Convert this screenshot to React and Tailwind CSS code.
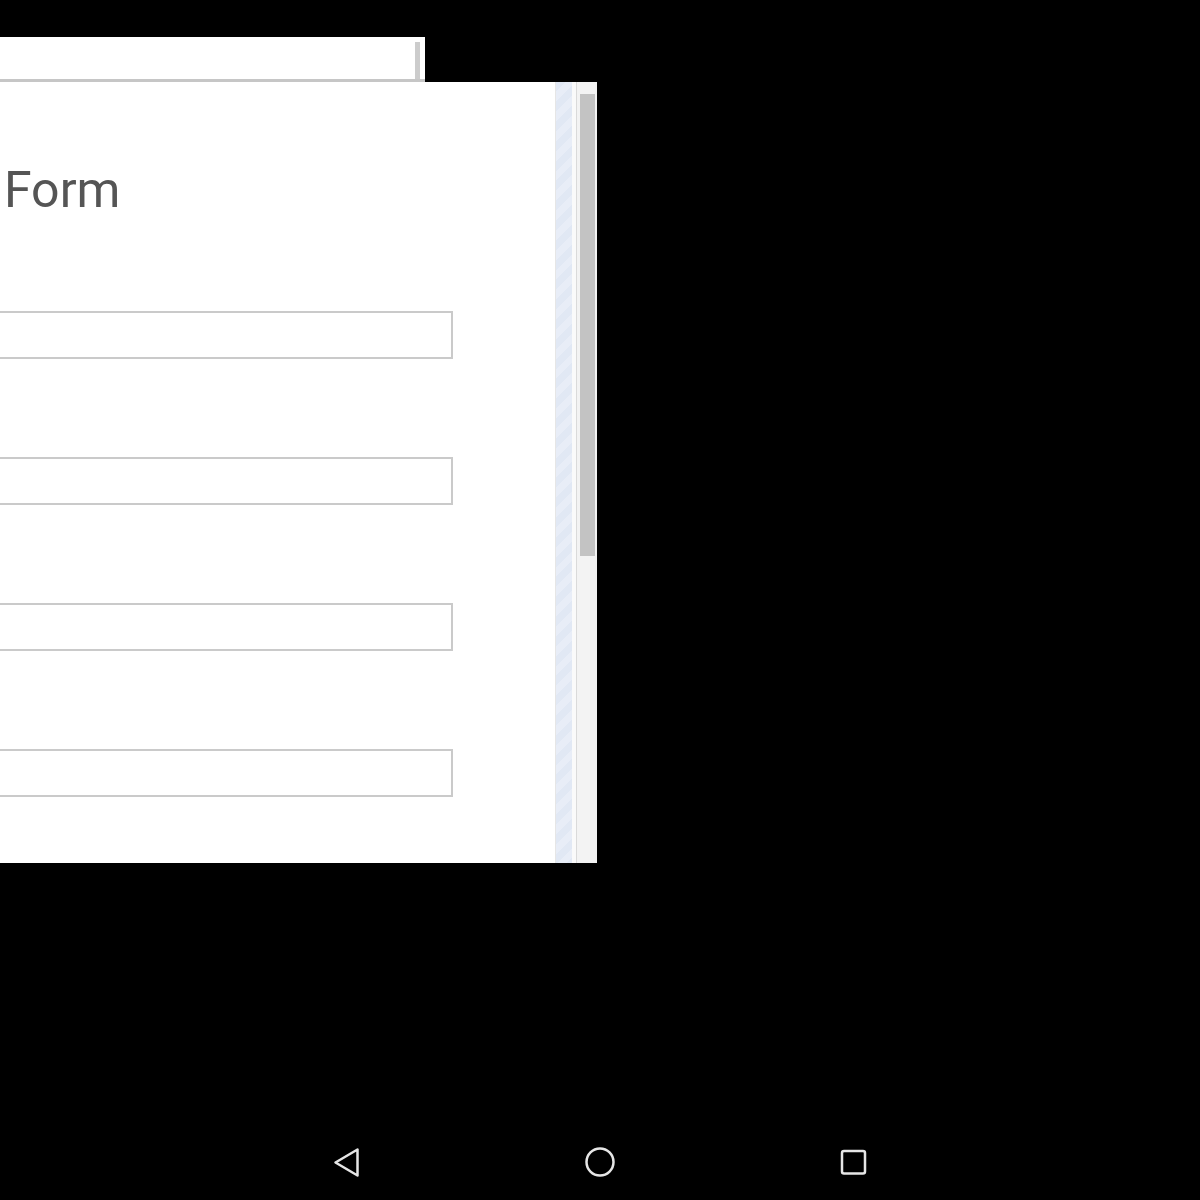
export default function App() {
  const fields = [0, 1, 2, 3];

  return (
    <div className="w-[1200px] h-[1200px] bg-black flex flex-col overflow-hidden" style={{ fontFamily: "Roboto, 'Liberation Sans', sans-serif" }}>
      {/* window behind */}
      <div className="mt-[37px] w-[425px] h-[45px] bg-white border-b-[3px] border-[#c6c6c6] flex justify-end items-end pr-[5px]">
        <div className="w-[5px] h-[37px] bg-[#cccccc]" />
      </div>

      {/* front window */}
      <div className="w-[597px] h-[781px] bg-white flex">
        <div className="w-[555px] pt-[83px]">
          <h1 className="pl-[4px] text-[50px] leading-none text-[#555555] font-normal">Form</h1>
          <div className="mt-[96px] flex flex-col gap-[98px]">
            {fields.map((f) => (
              <div key={f} className="w-[453px] h-[48px] border-2 border-l-0 border-[#cacaca] bg-white" />
            ))}
          </div>
        </div>
        <div className="w-[17px] bg-[repeating-linear-gradient(135deg,#e1e8f4_0px,#e1e8f4_7px,#e8edf7_7px,#e8edf7_14px)] border-l border-[#e6e6e6]" />
        <div className="w-[4px] bg-[#fafafa]" />
        <div className="w-[21px] bg-[#f3f3f3] border-l border-[#dadada] pl-[3px] pt-[12px]">
          <div className="w-[15px] h-[462px] bg-[#c3c3c3]" />
        </div>
      </div>

      {/* nav bar */}
      <div className="mt-auto h-[76px] flex items-center justify-center gap-[221px]">
        <svg width="32" height="32" viewBox="0 0 32 32" fill="none" stroke="#e6e6e6" strokeWidth="2.5" strokeLinejoin="round">
          <path d="M4.5 16.5 L26.5 3.5 L26.5 29.5 Z" />
        </svg>
        <svg width="32" height="32" viewBox="0 0 32 32" fill="none" stroke="#e6e6e6" strokeWidth="2.5">
          <circle cx="16" cy="16" r="13.5" />
        </svg>
        <svg width="32" height="32" viewBox="0 0 32 32" fill="none" stroke="#e6e6e6" strokeWidth="2.5">
          <rect x="5" y="5" width="23" height="22.5" rx="2" />
        </svg>
      </div>
    </div>
  );
}
